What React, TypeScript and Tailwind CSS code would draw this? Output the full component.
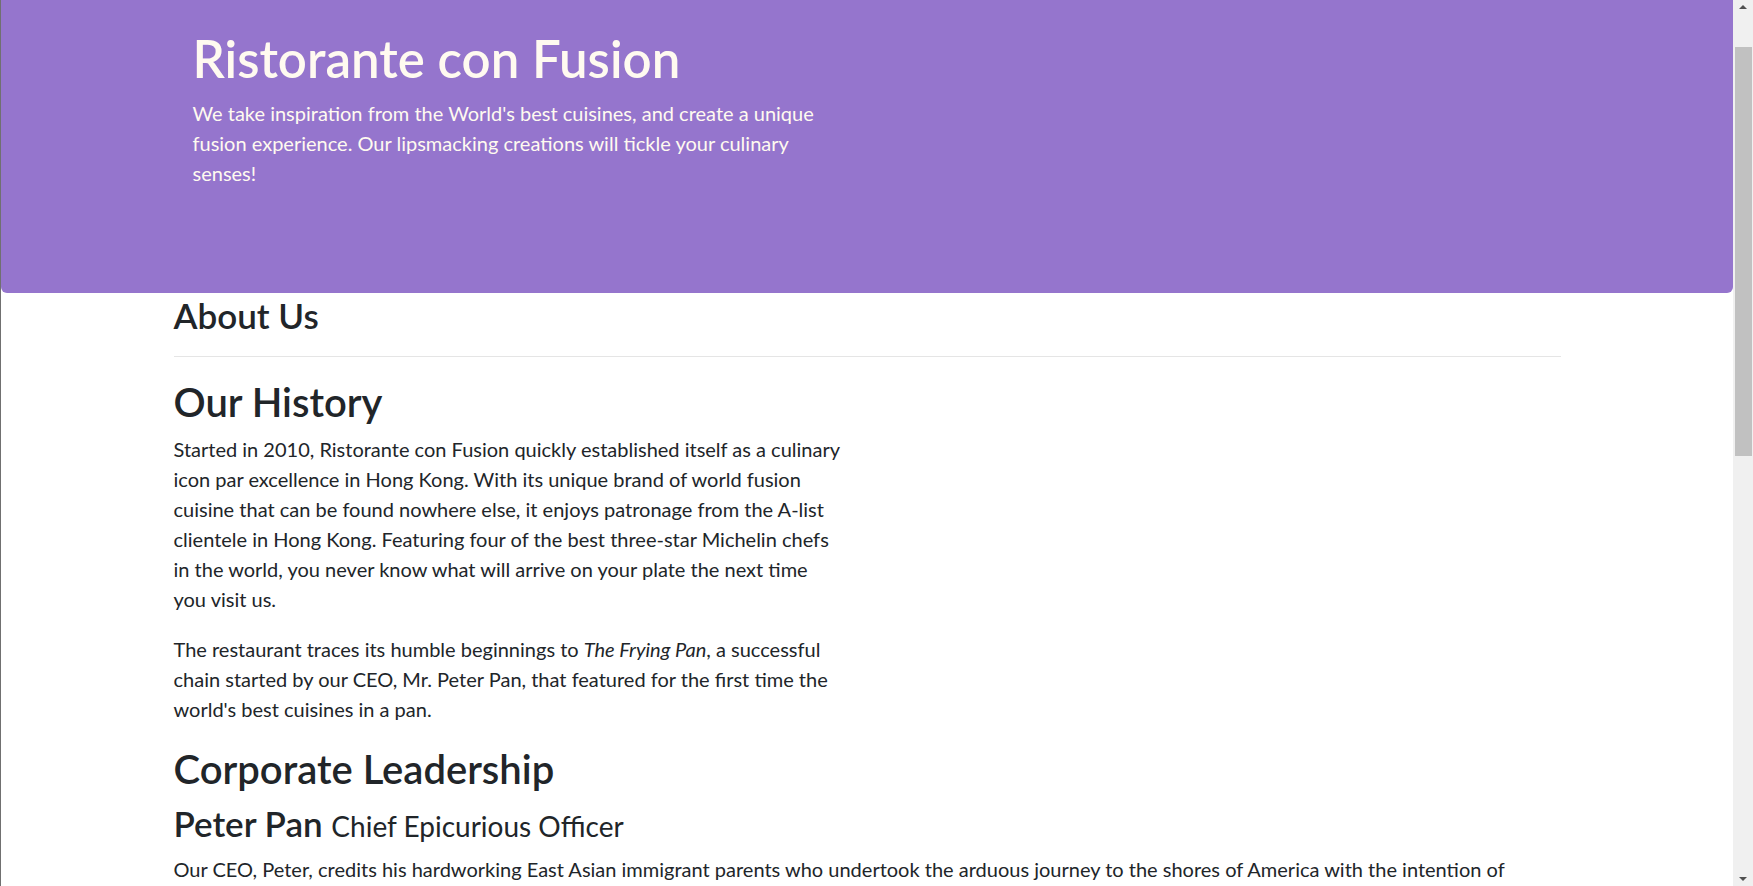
import React from "react";

const font = { fontFamily: '"Lato", "Open Sans", "Noto Sans", sans-serif' };

export default function App() {
  return (
    <div className="flex h-[886px] w-full overflow-hidden bg-white text-[#212529]" style={font}>
      <div className="w-px shrink-0 bg-[#707070]" />
      <main className="flex-1 min-w-0 overflow-hidden">
        <header className="h-[293px] rounded-b-[6px] bg-[#9575CD] text-[#FFFAF0]">
          <div className="mx-auto w-[1425px] pl-[38px] pt-[28px]">
            <h1 className="text-[51px] leading-[61px] font-semibold whitespace-nowrap">Ristorante con Fusion</h1>
            <p className="mt-[9px] text-[20px] leading-[30px] whitespace-nowrap">
              We take inspiration from the World's best cuisines, and create a unique
              <br />
              fusion experience. Our lipsmacking creations will tickle your culinary
              <br />
              senses!
            </p>
          </div>
        </header>
        <div className="mx-auto w-[1425px] px-[19px]">
          <h3 className="mt-[1px] text-[35px] leading-[42px] font-semibold">About Us</h3>
          <hr className="mt-[20px] border-0 border-t border-[#e5e5e5]" />
          <h2 className="mt-[21px] text-[40px] leading-[48px] font-semibold">Our History</h2>
          <div className="mt-[8px] text-[20px] leading-[30px] whitespace-nowrap">
            <p>
              Started in 2010, Ristorante con Fusion quickly established itself as a culinary
              <br />
              icon par excellence in Hong Kong. With its unique brand of world fusion
              <br />
              cuisine that can be found nowhere else, it enjoys patronage from the A-list
              <br />
              clientele in Hong Kong. Featuring four of the best three-star Michelin chefs
              <br />
              in the world, you never know what will arrive on your plate the next time
              <br />
              you visit us.
            </p>
            <p className="mt-[20px]">
              The restaurant traces its humble beginnings to <em>The Frying Pan</em>, a successful
              <br />
              chain started by our CEO, Mr. Peter Pan, that featured for the first time the
              <br />
              world's best cuisines in a pan.
            </p>
          </div>
          <h2 className="mt-[21px] text-[40px] leading-[48px] font-semibold">Corporate Leadership</h2>
          <h3 className="mt-[9px] text-[35px] leading-[42px] font-semibold whitespace-nowrap">
            Peter Pan <span className="text-[28px] font-normal">Chief Epicurious Officer</span>
          </h3>
          <p className="mt-[7px] text-[20px] leading-[30px] whitespace-nowrap">
            Our CEO, Peter, credits his hardworking East Asian immigrant parents who undertook the arduous journey to the shores of America with the intention of
            <br />
            giving their children the best future. His mother's wizardy in the kitchen whipping up the tastiest dishes at the shoestring budget, instilled in him the love of food and cooking.
          </p>
        </div>
      </main>
      <div className="relative w-[20px] shrink-0 bg-[#f0f0f0]">
        <svg className="absolute left-[6px] top-[4px]" width="8" height="5" viewBox="0 0 8 5">
          <path d="M0 5 L4 1 L8 5 Z" fill="#505050" />
        </svg>
        <div className="absolute left-[2px] top-[47px] h-[409px] w-[17px] bg-[#c1c1c1]" />
        <svg className="absolute left-[6px] bottom-[4px]" width="8" height="5" viewBox="0 0 8 5">
          <path d="M0 0 L4 4 L8 0 Z" fill="#505050" />
        </svg>
      </div>
    </div>
  );
}
